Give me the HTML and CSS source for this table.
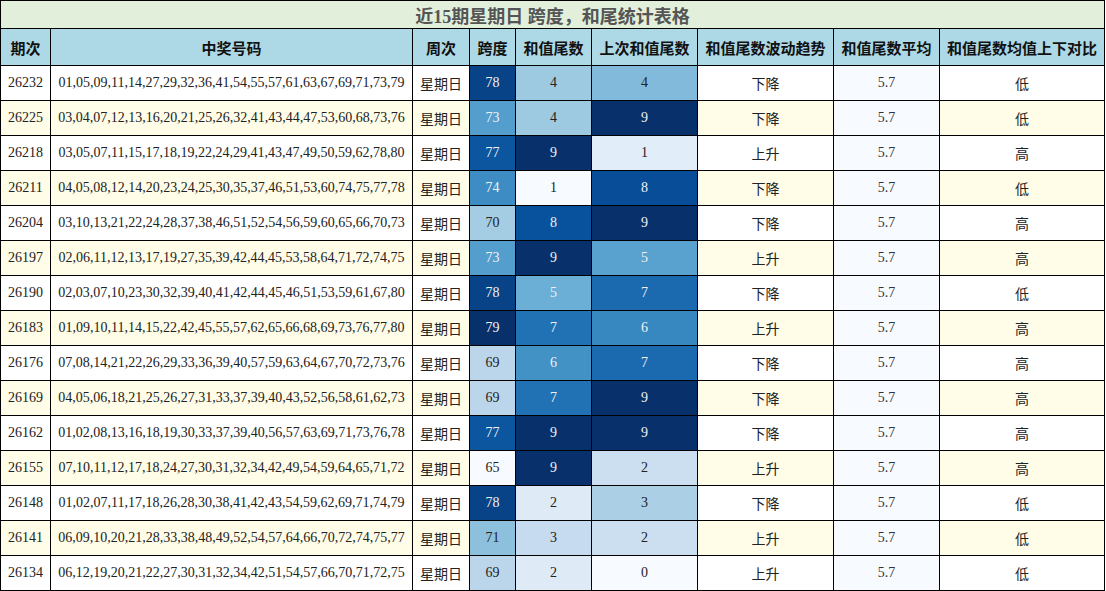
FILE: index.html
```html
<!DOCTYPE html>
<html lang="zh">
<head>
<meta charset="utf-8">
<title>近15期星期日 跨度，和尾统计表格</title>
<link rel="stylesheet" href="styles.css">
</head>
<body>
<table class="stats">
<colgroup>
<col class="c-issue"><col class="c-nums"><col class="c-week"><col class="c-span"><col class="c-tail"><col class="c-prev"><col class="c-trend"><col class="c-avg"><col class="c-cmp">
</colgroup>
<thead>
<tr class="title-row"><th colspan="9" class="title">近15期星期日 跨度，和尾统计表格</th></tr>
<tr class="head-row"><th>期次</th><th>中奖号码</th><th>周次</th><th>跨度</th><th>和值尾数</th><th>上次和值尾数</th><th>和值尾数波动趋势</th><th>和值尾数平均</th><th>和值尾数均值上下对比</th></tr>
</thead>
<tbody>
<tr class="odd"><td>26232</td><td>01,05,09,11,14,27,29,32,36,41,54,55,57,61,63,67,69,71,73,79</td><td>星期日</td><td class="lt" style="background:#084387">78</td><td class="dk" style="background:#9ecae1">4</td><td class="dk" style="background:#82badb">4</td><td>下降</td><td class="avg">5.7</td><td>低</td></tr>
<tr class="even"><td>26225</td><td>03,04,07,12,13,16,20,21,25,26,32,41,43,44,47,53,60,68,73,76</td><td>星期日</td><td class="lt" style="background:#549ecd">73</td><td class="dk" style="background:#9ecae1">4</td><td class="lt" style="background:#08306b">9</td><td>下降</td><td class="avg">5.7</td><td>低</td></tr>
<tr class="odd"><td>26218</td><td>03,05,07,11,15,17,18,19,22,24,29,41,43,47,49,50,59,62,78,80</td><td>星期日</td><td class="lt" style="background:#0c56a0">77</td><td class="lt" style="background:#08306b">9</td><td class="dk" style="background:#e1edf8">1</td><td>上升</td><td class="avg">5.7</td><td>高</td></tr>
<tr class="even"><td>26211</td><td>04,05,08,12,14,20,23,24,25,30,35,37,46,51,53,60,74,75,77,78</td><td>星期日</td><td class="lt" style="background:#3d8dc4">74</td><td class="dk" style="background:#f7fbff">1</td><td class="lt" style="background:#084d97">8</td><td>下降</td><td class="avg">5.7</td><td>低</td></tr>
<tr class="odd"><td>26204</td><td>03,10,13,21,22,24,28,37,38,46,51,52,54,56,59,60,65,66,70,73</td><td>星期日</td><td class="dk" style="background:#a4cce3">70</td><td class="lt" style="background:#08519c">8</td><td class="lt" style="background:#08306b">9</td><td>下降</td><td class="avg">5.7</td><td>高</td></tr>
<tr class="even"><td>26197</td><td>02,06,11,12,13,17,19,27,35,39,42,44,45,53,58,64,71,72,74,75</td><td>星期日</td><td class="lt" style="background:#549ecd">73</td><td class="lt" style="background:#08306b">9</td><td class="lt" style="background:#59a2cf">5</td><td>上升</td><td class="avg">5.7</td><td>高</td></tr>
<tr class="odd"><td>26190</td><td>02,03,07,10,23,30,32,39,40,41,42,44,45,46,51,53,59,61,67,80</td><td>星期日</td><td class="lt" style="background:#084387">78</td><td class="lt" style="background:#6baed6">5</td><td class="lt" style="background:#1b6aaf">7</td><td>下降</td><td class="avg">5.7</td><td>低</td></tr>
<tr class="even"><td>26183</td><td>01,09,10,11,14,15,22,42,45,55,57,62,65,66,68,69,73,76,77,80</td><td>星期日</td><td class="lt" style="background:#08306b">79</td><td class="lt" style="background:#2171b5">7</td><td class="lt" style="background:#3787c0">6</td><td>上升</td><td class="avg">5.7</td><td>高</td></tr>
<tr class="odd"><td>26176</td><td>07,08,14,21,22,26,29,33,36,39,40,57,59,63,64,67,70,72,73,76</td><td>星期日</td><td class="dk" style="background:#bbd6eb">69</td><td class="lt" style="background:#4292c6">6</td><td class="lt" style="background:#1b6aaf">7</td><td>下降</td><td class="avg">5.7</td><td>高</td></tr>
<tr class="even"><td>26169</td><td>04,05,06,18,21,25,26,27,31,33,37,39,40,43,52,56,58,61,62,73</td><td>星期日</td><td class="dk" style="background:#bbd6eb">69</td><td class="lt" style="background:#2171b5">7</td><td class="lt" style="background:#08306b">9</td><td>下降</td><td class="avg">5.7</td><td>高</td></tr>
<tr class="odd"><td>26162</td><td>01,02,08,13,16,18,19,30,33,37,39,40,56,57,63,69,71,73,76,78</td><td>星期日</td><td class="lt" style="background:#0c56a0">77</td><td class="lt" style="background:#08306b">9</td><td class="lt" style="background:#08306b">9</td><td>下降</td><td class="avg">5.7</td><td>高</td></tr>
<tr class="even"><td>26155</td><td>07,10,11,12,17,18,24,27,30,31,32,34,42,49,54,59,64,65,71,72</td><td>星期日</td><td class="dk" style="background:#f7fbff">65</td><td class="lt" style="background:#08306b">9</td><td class="dk" style="background:#cbdff1">2</td><td>上升</td><td class="avg">5.7</td><td>高</td></tr>
<tr class="odd"><td>26148</td><td>01,02,07,11,17,18,26,28,30,38,41,42,43,54,59,62,69,71,74,79</td><td>星期日</td><td class="lt" style="background:#084387">78</td><td class="dk" style="background:#deebf7">2</td><td class="dk" style="background:#abd0e6">3</td><td>下降</td><td class="avg">5.7</td><td>低</td></tr>
<tr class="even"><td>26141</td><td>06,09,10,20,21,28,33,38,48,49,52,54,57,64,66,70,72,74,75,77</td><td>星期日</td><td class="dk" style="background:#8cc0dd">71</td><td class="dk" style="background:#c6dbef">3</td><td class="dk" style="background:#cbdff1">2</td><td>上升</td><td class="avg">5.7</td><td>低</td></tr>
<tr class="odd"><td>26134</td><td>06,12,19,20,21,22,27,30,31,32,34,42,51,54,57,66,70,71,72,75</td><td>星期日</td><td class="dk" style="background:#bbd6eb">69</td><td class="dk" style="background:#deebf7">2</td><td class="dk" style="background:#f7fbff">0</td><td>上升</td><td class="avg">5.7</td><td>低</td></tr>
</tbody>
</table>
</body>
</html>
```
FILE: styles.css
```css
html, body {
  margin: 0;
  padding: 0;
  background: #ffffff;
}
.stats {
  border-collapse: collapse;
  table-layout: fixed;
  width: 1105px;
  font-family: "Liberation Serif", "Noto Sans CJK SC", serif;
  font-size: 14px;
  color: #222;
}
.c-issue { width: 50px; }
.c-nums { width: 362px; }
.c-week { width: 57px; }
.c-span { width: 46px; }
.c-tail { width: 76px; }
.c-prev { width: 106px; }
.c-trend { width: 136px; }
.c-avg { width: 106px; }
.c-cmp { width: 165px; }
.stats th, .stats td {
  border: 1px solid #000;
  padding: 0;
  text-align: center;
  vertical-align: middle;
  white-space: nowrap;
  overflow: hidden;
}
.title-row { height: 28px; }
.title {
  background: #e2efda;
  color: #555;
  font-size: 18px;
  font-weight: bold;
  border-bottom: 2px solid #000;
}
.head-row { height: 37px; }
.head-row th {
  background: #add8e6;
  color: #111;
  font-size: 15px;
  font-weight: bold;
}
.stats tbody tr { height: 35px; }
.odd td { background: #ffffff; }
.even td { background: #fffde8; }
.stats td.avg { background: #f7fbff; color: #333; }
.stats td.lt { color: #f1f1f1; }
.stats td.dk { color: #222; }
```
